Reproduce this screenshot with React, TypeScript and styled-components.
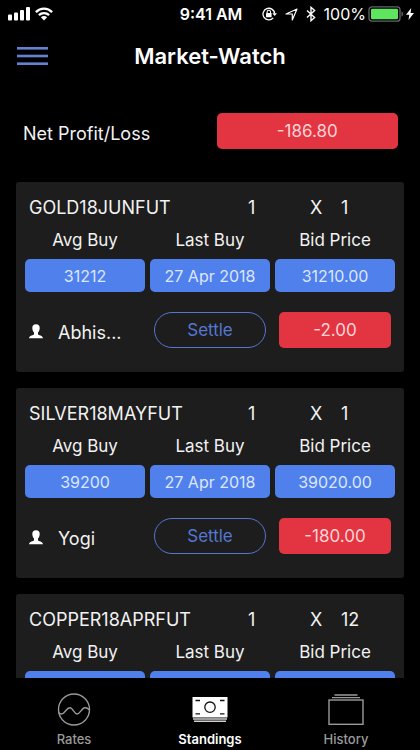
import React from "react";
import styled, { createGlobalStyle, css } from "styled-components";

const color = {
  page: "#000000",
  card: "#1d1d1d",
  text: "#f2f2f2",
  blue: "#5080ec",
  outline: "#5577d2",
  red: "#e33441",
  muted: "#9a9a9a",
};

const GlobalStyle = createGlobalStyle`
  *, *::before, *::after { box-sizing: border-box; }
  body {
    margin: 0;
    background: ${color.page};
    color: ${color.text};
    font-family: Inter, "Liberation Sans", sans-serif;
  }
  button { font-family: inherit; }
`;

const Screen = styled.div`
  display: flex;
  flex-direction: column;
  height: 100vh;
  overflow: hidden;
`;

const StatusBar = styled.div`
  display: grid;
  grid-template-columns: 1fr auto 1fr;
  align-items: center;
  flex: none;
  height: 28px;
  padding: 0 6px 0 8px;
  color: #ffffff;
`;

const SignalGroup = styled.div`
  display: flex;
  align-items: center;
  gap: 5px;
`;

const Clock = styled.time`
  font-size: 16px;
  font-weight: 600;
`;

const DeviceGroup = styled.div`
  display: flex;
  align-items: center;
  justify-content: flex-end;
  gap: 2px;
`;

const DeviceIcons = styled.div`
  display: flex;
  align-items: center;
  gap: 8px;
  margin-right: 6px;
`;

const BatteryText = styled.span`
  font-size: 16px;
`;

const Header = styled.header`
  display: grid;
  grid-template-columns: 48px 1fr 48px;
  align-items: center;
  flex: none;
  height: 56px;
  padding: 0 8px;
`;

const MenuButton = styled.button`
  display: grid;
  place-items: center;
  height: 40px;
  padding: 0;
  border: 0;
  background: none;
  color: #6482d2;
`;

const Title = styled.h1`
  margin: 0;
  font-size: 22px;
  font-weight: 600;
  line-height: 28px;
  text-align: center;
  color: #ffffff;
`;

const Summary = styled.section`
  display: grid;
  grid-template-columns: 1fr 1fr;
  gap: 12px;
  flex: none;
  padding: 29px 22px 33px 23px;
`;

const SummaryLabel = styled.span`
  padding-top: 9px;
  font-size: 18px;
  line-height: 24px;
`;

const valueBox = css`
  display: flex;
  align-items: center;
  justify-content: center;
  border-radius: 5px;
  white-space: nowrap;
  color: #dce7ff;
`;

const PriceBox = styled.div`
  ${valueBox}
  height: 33px;
  background: ${color.blue};
  font-size: 16px;
`;

const LossBox = styled.div<{ $inset?: boolean }>`
  ${valueBox}
  height: 36px;
  margin: 0 ${(p) => (p.$inset ? "4px" : "0")};
  background: ${color.red};
  color: #ffd3d6;
  font-size: 17px;
`;

const Positions = styled.main`
  display: flex;
  flex: 1;
  flex-direction: column;
  gap: 16px;
  min-height: 0;
  padding: 0 16px;
  overflow: hidden;
`;

const Card = styled.article`
  flex: none;
  padding: 12px 9px 24px;
  border-radius: 3px;
  background: ${color.card};
`;

const ContractRow = styled.div`
  display: grid;
  grid-template-columns: minmax(0, 1fr) 62px 31px 54px;
  padding-left: 4px;
  font-size: 18px;
  line-height: 28px;
`;

const ContractName = styled.h2`
  margin: 0;
  font-size: 18px;
  font-weight: 400;
`;

const Columns = styled.div`
  display: grid;
  grid-template-columns: repeat(3, minmax(0, 1fr));
  gap: 5px;
`;

const PriceColumn = styled.div`
  text-align: center;
`;

const PriceLabel = styled.div`
  padding: 6px 0 7px;
  font-size: 17px;
  line-height: 24px;
`;

const ActionRow = styled(Columns)`
  padding-top: 20px;
`;

const Owner = styled.div`
  display: flex;
  align-items: center;
  gap: 15px;
  padding: 2px 0 0 4px;
  color: #ffffff;
`;

const OwnerName = styled.span`
  padding-top: 4px;
  font-size: 18px;
  line-height: 24px;
  color: ${color.text};
`;

const SettleButton = styled.button`
  height: 36px;
  margin: 0 4px;
  padding: 0;
  border: 1px solid ${color.outline};
  border-radius: 18px;
  background: none;
  color: ${color.outline};
  font-size: 17px;
`;

const TabBar = styled.nav`
  display: grid;
  grid-template-columns: repeat(3, 1fr);
  flex: none;
  height: 72px;
  padding: 14px 6px 0;
`;

const Tab = styled.button<{ $active?: boolean }>`
  display: flex;
  flex-direction: column;
  align-items: center;
  gap: 2px;
  padding: 0;
  border: 0;
  background: none;
  color: ${(p) => (p.$active ? "#ffffff" : color.muted)};
  font-size: 13px;
  font-weight: ${(p) => (p.$active ? 600 : 500)};
  line-height: 18px;
`;

const SignalIcon = () => (
  <svg width="22" height="14" viewBox="0 0 22 14" fill="currentColor" aria-hidden="true">
    <rect x="0" y="7.5" width="4" height="6" rx="1" />
    <rect x="6" y="5.5" width="4" height="8" rx="1" />
    <rect x="12" y="3" width="4" height="10.5" rx="1" />
    <rect x="18" y="0" width="4" height="13.5" rx="1" />
  </svg>
);

const WifiIcon = () => (
  <svg width="18" height="14" viewBox="0 0 18 14" aria-hidden="true">
    <g fill="none" stroke="currentColor" strokeWidth="2.4">
      <path d="M0.9 5.1C5.4 0.5 12.6 0.5 17.1 5.1" />
      <path d="M3.9 8.2C6.8 5.4 11.2 5.4 14.1 8.2" />
    </g>
    <path d="M5.9 10.3C7.7 8.7 10.3 8.7 12.1 10.3L9 13.5Z" fill="currentColor" />
  </svg>
);

const RotationLockIcon = () => (
  <svg width="15" height="14" viewBox="0 0 15 14" fill="none" stroke="currentColor" aria-hidden="true">
    <path d="M12.6 6.5A5.8 5.8 0 1 0 11.2 10.9" strokeWidth="1.3" />
    <path d="M10.3 6.2H15L12.7 9Z" fill="currentColor" stroke="none" />
    <rect x="4" y="6" width="5.6" height="4.3" rx="0.5" fill="currentColor" stroke="none" />
    <path d="M5.1 6.3V5A1.7 1.7 0 0 1 8.5 5V6.3" strokeWidth="1.1" />
  </svg>
);

const LocationIcon = () => (
  <svg width="13" height="13" viewBox="0 0 13 13" fill="none" stroke="currentColor" strokeWidth="1.2" strokeLinejoin="round" aria-hidden="true">
    <path d="M1 6L12 1L7.3 12V6Z" />
  </svg>
);

const BluetoothIcon = () => (
  <svg width="10" height="16" viewBox="0 0 10 16" fill="none" stroke="currentColor" strokeWidth="1.4" aria-hidden="true">
    <path d="M1 4.5L8.6 11.5L5 14.7V1.3L8.6 4.5L1 11.5" />
  </svg>
);

const BatteryIcon = () => (
  <svg width="36" height="16" viewBox="0 0 36 16" aria-hidden="true">
    <rect x="1" y="0.8" width="31" height="14.4" rx="3" fill="none" stroke="#62666a" strokeWidth="1.3" />
    <rect x="3" y="2.8" width="27" height="10.4" rx="1.2" fill="#5fe45f" />
    <path d="M33.5 5.3C35.6 6.3 35.6 9.7 33.5 10.7Z" fill="#62666a" />
  </svg>
);

const BoltIcon = () => (
  <svg width="8" height="12" viewBox="0 0 8 12" fill="currentColor" aria-hidden="true">
    <path d="M5.2 0L0 6.8H3.3L2.5 12L8 4.9H4.6Z" />
  </svg>
);

const MenuIcon = () => (
  <svg width="31" height="20" viewBox="0 0 31 20" fill="currentColor" aria-hidden="true">
    <rect y="1" width="31" height="2.6" />
    <rect y="8.7" width="31" height="2.6" />
    <rect y="16.4" width="31" height="2.6" />
  </svg>
);

const PersonIcon = () => (
  <svg width="14" height="15" viewBox="0 0 14 15" fill="currentColor" aria-hidden="true">
    <path d="M7 0.2C9.5 0.2 10.8 1.7 10.7 4C10.6 6.3 9.9 7.7 9 8.6V10.3C9.6 11.6 13.6 11.2 14 14.2H0C0.4 11.2 4.4 11.6 5 10.3V8.6C4.1 7.7 3.4 6.3 3.3 4C3.2 1.7 4.5 0.2 7 0.2Z" />
  </svg>
);

const RatesIcon = () => (
  <svg width="36" height="36" viewBox="0 0 36 36" fill="none" stroke="currentColor" strokeWidth="1.4" aria-hidden="true">
    <circle cx="18" cy="17.5" r="15.5" />
    <path d="M2.8 20.8C4.6 22.2 6.3 22.4 7.9 20.8C10 18.7 11.7 15.4 14.3 15.8C17 16.3 18.2 21.8 21.1 22C23.9 22.1 25.4 16.5 28.5 15.8C30.5 15.4 32 16.4 33.2 17.8" />
  </svg>
);

const StandingsIcon = () => (
  <svg width="36" height="36" viewBox="0 0 36 36" aria-hidden="true">
    <rect x="0.5" y="5" width="35" height="20.5" fill="#ffffff" />
    <path d="M1 27H35M2 29.2H34" stroke="#d0d0d0" strokeWidth="1.4" />
    <g fill="none" stroke="#111111" strokeWidth="1.3">
      <circle cx="18" cy="15.2" r="5.2" />
      <path d="M3.5 8.5H8M28 8.5H32.5M3.5 21.8H8M28 21.8H32.5" />
    </g>
  </svg>
);

const HistoryIcon = () => (
  <svg width="36" height="36" viewBox="0 0 36 36" fill="none" stroke="currentColor" strokeWidth="1.4" aria-hidden="true">
    <rect x="1" y="8" width="34" height="24.3" />
    <path d="M4 5.6H32M6.5 3H29.5" />
  </svg>
);

interface Position {
  contract: string;
  lots: string;
  quantity: string;
  avgBuy: string;
  lastBuy: string;
  bid: string;
  owner: string;
  result: string;
}

const positions: Position[] = [
  { contract: "GOLD18JUNFUT", lots: "1", quantity: "1", avgBuy: "31212", lastBuy: "27 Apr 2018", bid: "31210.00", owner: "Abhis...", result: "-2.00" },
  { contract: "SILVER18MAYFUT", lots: "1", quantity: "1", avgBuy: "39200", lastBuy: "27 Apr 2018", bid: "39020.00", owner: "Yogi", result: "-180.00" },
  { contract: "COPPER18APRFUT", lots: "1", quantity: "12", avgBuy: "", lastBuy: "", bid: "", owner: "", result: "" },
];

const PositionCard = ({ position }: { position: Position }) => (
  <Card>
    <ContractRow>
      <ContractName>{position.contract}</ContractName>
      <span>{position.lots}</span>
      <span>X</span>
      <span>{position.quantity}</span>
    </ContractRow>
    <Columns>
      <PriceColumn>
        <PriceLabel>Avg Buy</PriceLabel>
        <PriceBox>{position.avgBuy}</PriceBox>
      </PriceColumn>
      <PriceColumn>
        <PriceLabel>Last Buy</PriceLabel>
        <PriceBox>{position.lastBuy}</PriceBox>
      </PriceColumn>
      <PriceColumn>
        <PriceLabel>Bid Price</PriceLabel>
        <PriceBox>{position.bid}</PriceBox>
      </PriceColumn>
    </Columns>
    {position.owner && (
      <ActionRow>
        <Owner>
          <PersonIcon />
          <OwnerName>{position.owner}</OwnerName>
        </Owner>
        <SettleButton type="button">Settle</SettleButton>
        <LossBox $inset>{position.result}</LossBox>
      </ActionRow>
    )}
  </Card>
);

export default function App() {
  return (
    <>
      <GlobalStyle />
      <Screen>
        <StatusBar>
          <SignalGroup>
            <SignalIcon />
            <WifiIcon />
          </SignalGroup>
          <Clock>9:41 AM</Clock>
          <DeviceGroup>
            <DeviceIcons>
              <RotationLockIcon />
              <LocationIcon />
              <BluetoothIcon />
            </DeviceIcons>
            <BatteryText>100%</BatteryText>
            <BatteryIcon />
            <BoltIcon />
          </DeviceGroup>
        </StatusBar>
        <Header>
          <MenuButton type="button" aria-label="Menu">
            <MenuIcon />
          </MenuButton>
          <Title>Market-Watch</Title>
        </Header>
        <Summary>
          <SummaryLabel>Net Profit/Loss</SummaryLabel>
          <LossBox>-186.80</LossBox>
        </Summary>
        <Positions>
          {positions.map((position) => (
            <PositionCard key={position.contract} position={position} />
          ))}
        </Positions>
        <TabBar>
          <Tab type="button">
            <RatesIcon />
            Rates
          </Tab>
          <Tab type="button" $active aria-current="page">
            <StandingsIcon />
            Standings
          </Tab>
          <Tab type="button">
            <HistoryIcon />
            History
          </Tab>
        </TabBar>
      </Screen>
    </>
  );
}
